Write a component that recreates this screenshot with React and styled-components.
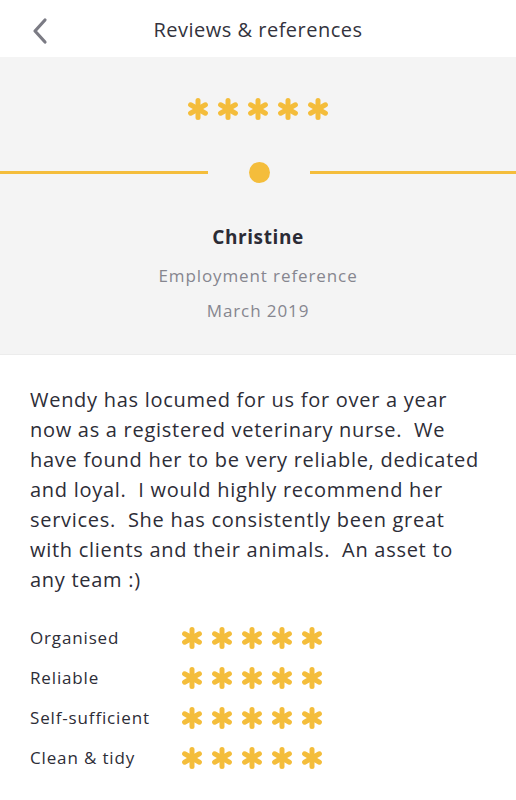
import React from "react";
import styled, { createGlobalStyle } from "styled-components";

const Global = createGlobalStyle`
  html, body { margin: 0; padding: 0; background: #ffffff; }
  body { font-family: "Open Sans", "Noto Sans", sans-serif; -webkit-font-smoothing: antialiased; }
  * { box-sizing: border-box; }
`;

const YELLOW = "#f4bd3b";

const Page = styled.div`
  width: 516px;
  min-height: 800px;
  background: #fff;
  display: flex;
  flex-direction: column;
`;

const Header = styled.header`
  height: 57px;
  display: flex;
  align-items: center;
  justify-content: center;
  position: relative;
`;

const BackButton = styled.button`
  position: absolute;
  left: 26px;
  top: 16px;
  width: 28px;
  height: 30px;
  border: 0;
  background: none;
  padding: 0;
  display: flex;
  align-items: center;
  justify-content: center;
  color: #7b7b84;
`;

const Title = styled.h1`
  margin: 0;
  font-size: 20px;
  font-weight: 400;
  color: #33333d;
  letter-spacing: 0.5px;
  padding-top: 2px;
`;

const Summary = styled.section`
  background: #f4f4f4;
  border-bottom: 1px solid #ececec;
  height: 298px;
  display: flex;
  flex-direction: column;
  align-items: center;
  padding-top: 41px;
`;

const StarRow = styled.div`
  display: flex;
  gap: ${(p) => p.$gap}px;
`;

const Divider = styled.div`
  width: 100%;
  display: flex;
  align-items: center;
  margin-top: 42px;
`;

const Line = styled.div`
  height: 3px;
  background: ${YELLOW};
  flex: ${(p) => (p.$left ? "0 0 208px" : "1")};
`;

const DotWrap = styled.div`
  flex: 0 0 102px;
  display: flex;
  justify-content: center;
`;

const Dot = styled.div`
  width: 21px;
  height: 21px;
  border-radius: 50%;
  background: ${YELLOW};
`;

const Name = styled.div`
  margin-top: 42px;
  font-size: 19px;
  font-weight: 700;
  color: #2b2b35;
  line-height: 24px;
  letter-spacing: 0.6px;
`;

const Meta = styled.div`
  margin-top: ${(p) => p.$mt}px;
  font-size: 17px;
  color: #86868f;
  line-height: 22px;
  letter-spacing: 0.9px;
`;

const Body = styled.p`
  margin: 0;
  padding: 30px 30px 0 30px;
  font-size: 20px;
  line-height: 30px;
  color: #2d2d37;
  white-space: pre-wrap;
  letter-spacing: 0.72px;
`;

const Ratings = styled.div`
  padding: 32px 30px 0 30px;
  display: grid;
  grid-template-columns: 151px auto;
  row-gap: 18px;
  align-items: center;
  justify-content: start;
`;

const Label = styled.div`
  font-size: 17px;
  color: #2d2d37;
  line-height: 22px;
  letter-spacing: 0.85px;
`;

const Star = ({ size = 22 }) => (
  <svg width={size} height={size} viewBox="0 0 22 22">
    <g stroke={YELLOW} strokeWidth="5" strokeLinecap="round">
      <line x1="11" y1="2.5" x2="11" y2="19.5" />
      <line x1="3.6" y1="6.75" x2="18.4" y2="15.25" />
      <line x1="3.6" y1="15.25" x2="18.4" y2="6.75" />
    </g>
  </svg>
);

const Stars = ({ gap }) => (
  <StarRow $gap={gap}>
    {[0, 1, 2, 3, 4].map((i) => (
      <Star key={i} />
    ))}
  </StarRow>
);

const text =
  "Wendy has locumed for us for over a year\nnow as a registered veterinary nurse.  We\nhave found her to be very reliable, dedicated\nand loyal.  I would highly recommend her\nservices.  She has consistently been great\nwith clients and their animals.  An asset to\nany team :)";

const ratings = ["Organised", "Reliable", "Self-sufficient", "Clean & tidy"];

export default function App() {
  return (
    <Page>
      <Global />
      <Header>
        <BackButton aria-label="Back">
          <svg width="18" height="28" viewBox="0 0 18 28">
            <polyline
              points="14,3 4,14 14,25"
              fill="none"
              stroke="currentColor"
              strokeWidth="3.2"
              strokeLinecap="round"
              strokeLinejoin="round"
            />
          </svg>
        </BackButton>
        <Title>Reviews &amp; references</Title>
      </Header>
      <Summary>
        <Stars gap={8} />
        <Divider>
          <Line $left />
          <DotWrap>
            <Dot />
          </DotWrap>
          <Line />
        </Divider>
        <Name>Christine</Name>
        <Meta $mt={16}>Employment reference</Meta>
        <Meta $mt={13}>March 2019</Meta>
      </Summary>
      <Body>{text}</Body>
      <Ratings>
        {ratings.map((r) => (
          <React.Fragment key={r}>
            <Label>{r}</Label>
            <Stars gap={8} />
          </React.Fragment>
        ))}
      </Ratings>
    </Page>
  );
}
